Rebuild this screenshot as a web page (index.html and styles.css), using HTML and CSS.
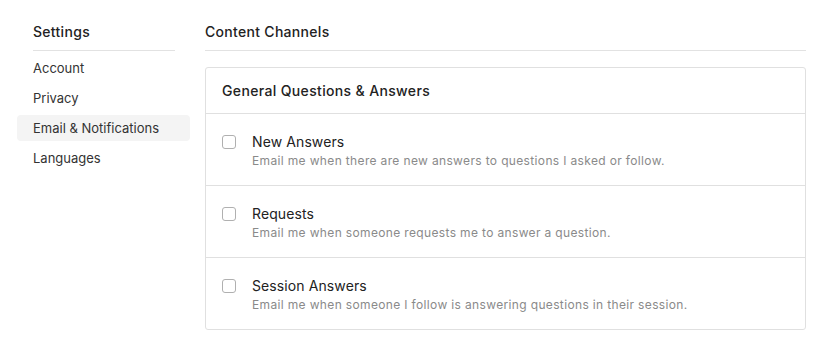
FILE: index.html
```html
<!DOCTYPE html>
<html lang="en">

<head>
  <meta charset="UTF-8" />
  <meta name="viewport" content="width=device-width, initial-scale=1.0" />
  <title>Settings</title>
  <link rel="stylesheet" href="styles.css">
</head>

<body>
  <div class="layout">
    <aside class="sidebar">
      <h2 class="sidebar-title">Settings</h2>
      <nav class="nav">
        <a class="nav-item" href="#">Account</a>
        <a class="nav-item" href="#">Privacy</a>
        <a class="nav-item active" href="#">Email &amp; Notifications</a>
        <a class="nav-item" href="#">Languages</a>
      </nav>
    </aside>

    <main class="content">
      <h2 class="content-title">Content Channels</h2>

      <div class="panel">
        <div class="panel-header">General Questions &amp; Answers</div>

        <label class="option">
          <input type="checkbox" class="checkbox">
          <div class="option-text">
            <div class="option-title">New Answers</div>
            <div class="option-desc">Email me when there are new answers to questions I asked or follow.</div>
          </div>
        </label>

        <label class="option">
          <input type="checkbox" class="checkbox">
          <div class="option-text">
            <div class="option-title">Requests</div>
            <div class="option-desc">Email me when someone requests me to answer a question.</div>
          </div>
        </label>

        <label class="option">
          <input type="checkbox" class="checkbox">
          <div class="option-text">
            <div class="option-title">Session Answers</div>
            <div class="option-desc">Email me when someone I follow is answering questions in their session.</div>
          </div>
        </label>
      </div>
    </main>
  </div>
</body>

</html>
```

FILE: styles.css
```css
* {
  box-sizing: border-box;
}

html,
body {
  margin: 0;
  padding: 0;
  background: #fff;
  font-family: Inter, "Noto Sans", sans-serif;
  color: #222;
}

.layout {
  display: flex;
  gap: 15px;
  padding: 22px 28px 0 17px;
}

.sidebar {
  width: 173px;
  flex-shrink: 0;
}

.sidebar-title,
.content-title {
  margin: 0;
  font-size: 14px;
  font-weight: 500;
  line-height: 20px;
  letter-spacing: 0.3px;
  padding-bottom: 8px;
  border-bottom: 1px solid #e2e2e2;
}

.sidebar-title {
  margin: 0 15px 0 16px;
}

.nav {
  display: flex;
  flex-direction: column;
  padding-top: 2px;
}

.nav-item {
  display: block;
  height: 30px;
  line-height: 30px;
  padding-left: 16px;
  font-size: 13px;
  color: #333;
  text-decoration: none;
  border-radius: 4px;
}

.nav-item.active {
  background: #f4f4f4;
  height: 26px;
  line-height: 26px;
  margin: 2px 0;
}

.content {
  flex: 1;
}

.panel {
  margin-top: 16px;
  border: 1px solid #e0e0e0;
  border-radius: 3px;
}

.panel-header {
  height: 45px;
  line-height: 45px;
  padding: 0 16px;
  font-size: 14px;
  font-weight: 500;
  letter-spacing: 0.35px;
}

.option {
  display: flex;
  align-items: flex-start;
  height: 72px;
  padding: 19px 16px 0;
  border-top: 1px solid #e0e0e0;
  cursor: pointer;
}

.checkbox {
  appearance: none;
  -webkit-appearance: none;
  width: 14px;
  height: 14px;
  margin: 2px 16px 0 0;
  border: 1px solid #b0b0b0;
  border-radius: 3px;
  background: #fff;
  flex-shrink: 0;
}

.option-title {
  font-size: 14px;
  line-height: 18px;
  letter-spacing: 0.1px;
  color: #222;
}

.option-desc {
  font-size: 12px;
  line-height: 16px;
  letter-spacing: 0.35px;
  margin-top: 2px;
  color: #8a8a8a;
}
```
